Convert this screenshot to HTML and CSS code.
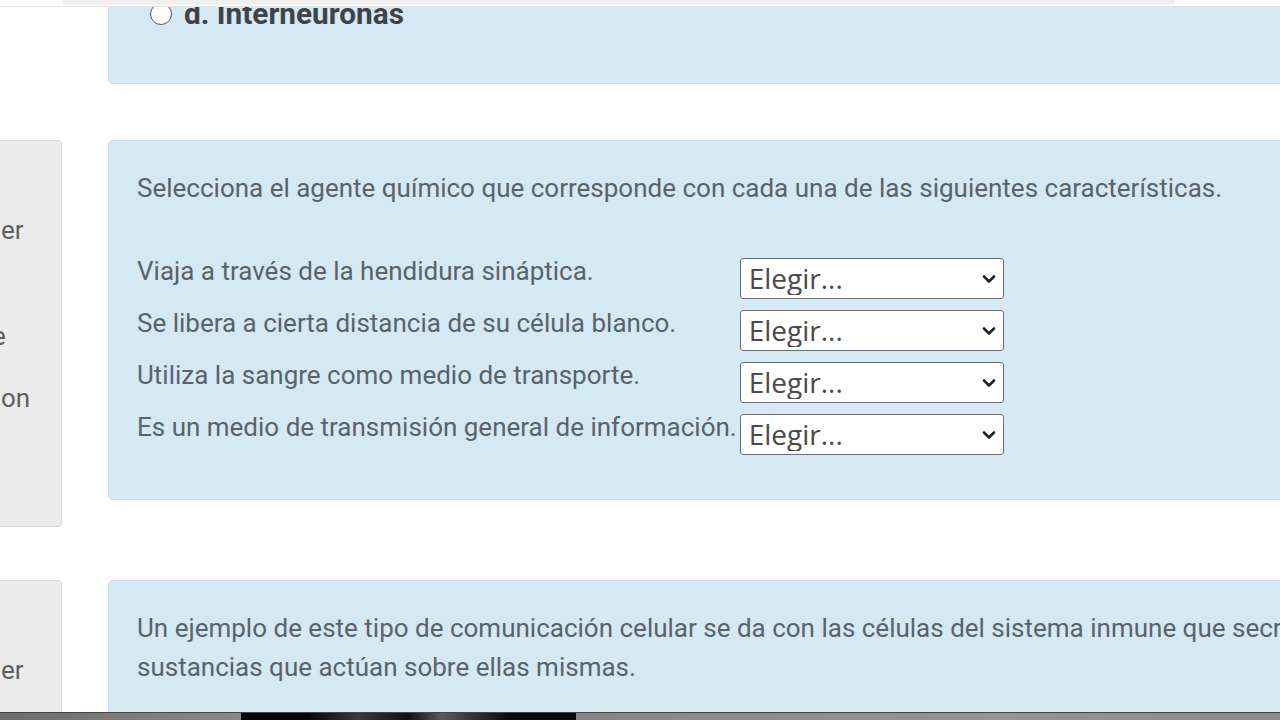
FILE: index.html
```html
<!DOCTYPE html>
<html lang="es">
<head>
  <meta charset="UTF-8">
  <title>Cuestionario</title>
  <link rel="stylesheet" href="styles.css">
</head>
<body>
  <div class="topbar">
    <div class="topbar-inner"></div>
  </div>

  <div class="page">
    <div class="que first">
      <div class="info empty"></div>
      <div class="content">
        <div class="formulation">
          <div class="answer">
            <span class="radio"></span>
            <span class="answer-text">d. Interneuronas</span>
          </div>
        </div>
      </div>
    </div>

    <div class="que">
      <div class="info">
        <p class="info-line">er</p>
        <p class="info-line cut gap-lg">e</p>
        <p class="info-line gap-sm">on</p>
      </div>
      <div class="content">
        <div class="formulation">
          <p class="qtext">Selecciona el agente químico que corresponde con cada una de las siguientes características.</p>
          <table class="answers">
            <tr>
              <td class="label">Viaja a través de la hendidura sináptica.</td>
              <td class="control">
                <div class="select-wrap">
                  <select><option>Elegir...</option></select>
                  <svg class="chevron" viewBox="0 0 16 16"><path d="M3 5.5l5 5 5-5" fill="none" stroke="currentColor" stroke-width="2.6" stroke-linecap="round" stroke-linejoin="round"/></svg>
                </div>
              </td>
            </tr>
            <tr>
              <td class="label">Se libera a cierta distancia de su célula blanco.</td>
              <td class="control">
                <div class="select-wrap">
                  <select><option>Elegir...</option></select>
                  <svg class="chevron" viewBox="0 0 16 16"><path d="M3 5.5l5 5 5-5" fill="none" stroke="currentColor" stroke-width="2.6" stroke-linecap="round" stroke-linejoin="round"/></svg>
                </div>
              </td>
            </tr>
            <tr>
              <td class="label">Utiliza la sangre como medio de transporte.</td>
              <td class="control">
                <div class="select-wrap">
                  <select><option>Elegir...</option></select>
                  <svg class="chevron" viewBox="0 0 16 16"><path d="M3 5.5l5 5 5-5" fill="none" stroke="currentColor" stroke-width="2.6" stroke-linecap="round" stroke-linejoin="round"/></svg>
                </div>
              </td>
            </tr>
            <tr>
              <td class="label">Es un medio de transmisión general de información.</td>
              <td class="control">
                <div class="select-wrap">
                  <select><option>Elegir...</option></select>
                  <svg class="chevron" viewBox="0 0 16 16"><path d="M3 5.5l5 5 5-5" fill="none" stroke="currentColor" stroke-width="2.6" stroke-linecap="round" stroke-linejoin="round"/></svg>
                </div>
              </td>
            </tr>
          </table>
        </div>
      </div>
    </div>

    <div class="que">
      <div class="info">
        <p class="info-line">er</p>
      </div>
      <div class="content">
        <div class="formulation">
          <p class="qtext">Un ejemplo de este tipo de comunicación celular se da con las células del sistema inmune que secretan sustancias que actúan sobre ellas mismas.</p>
        </div>
      </div>
    </div>
  </div>

  <div class="player">
    <div class="player-left"></div>
    <div class="player-video"></div>
    <div class="player-right"></div>
  </div>
</body>
</html>
```

FILE: styles.css
```css
* {
  margin: 0;
  padding: 0;
  box-sizing: border-box;
}

html, body {
  width: 1280px;
  height: 720px;
  overflow: hidden;
}

body {
  font-family: Roboto, 'Liberation Sans', sans-serif;
  background: #fff;
  color: #59636a;
  font-size: 26px;
}

/* header strip that sits over the page */
.topbar {
  position: fixed;
  top: 0;
  left: 0;
  right: 0;
  height: 7px;
  background: #fff;
  border-bottom: 1px solid #e2e4e6;
  z-index: 5;
}

.topbar-inner {
  margin-left: 62px;
  width: 1113px;
  height: 4px;
  background: #efeff0;
  border-radius: 0 0 8px 8px;
  box-shadow: 0 1px 2px rgba(0, 0, 0, 0.06);
}

.page {
  width: 1400px;
  margin-left: -10px;
  margin-top: -20px;
}

.que {
  display: flex;
  align-items: flex-start;
  gap: 46px;
  margin-bottom: 53px;
}

.que.first {
  margin-bottom: 56px;
}

.info {
  width: 72px;
  height: 387px;
  flex-shrink: 0;
  background: #ececec;
  border: 1px solid #d9d9d9;
  border-radius: 4px;
  padding: 74px 0 0 10px;
  overflow: hidden;
}

.info.empty {
  visibility: hidden;
  height: 10px;
}

.info-line {
  line-height: 30px;
  color: #5c5f62;
  white-space: nowrap;
}

.info-line.cut {
  text-indent: -9px;
}

.info-line.gap-lg {
  margin-top: 76px;
}

.info-line.gap-sm {
  margin-top: 32px;
}

.content {
  width: 1282px;
}

.formulation {
  background: #d4e9f4;
  border: 1px solid #c6e3ec;
  border-bottom-color: #b7dde6;
  border-radius: 5px;
  padding: 28px 29px 33px 28px;
}

.que.first .formulation {
  padding: 18px 29px 54px 41px;
}

.answer {
  display: flex;
  align-items: center;
  gap: 12px;
  height: 30px;
}

.radio {
  width: 22px;
  height: 22px;
  border: 1.5px solid #555;
  border-radius: 50%;
  background: #fff;
  flex-shrink: 0;
}

.answer-text {
  font-weight: 700;
  font-size: 29.8px;
  color: #3e4347;
  margin-top: -2px;
}

.qtext {
  line-height: 39px;
}

.qtext + .answers {
  margin-top: 50px;
}

.answers {
  border-collapse: collapse;
}

.answers td {
  padding: 0;
  vertical-align: top;
}

.answers .label {
  line-height: 27px;
  white-space: nowrap;
  padding-right: 3px;
}

.answers .control {
  padding-bottom: 11px;
}

.select-wrap {
  position: relative;
  width: 264px;
  height: 41px;
}

.select-wrap select {
  -webkit-appearance: none;
  appearance: none;
  width: 100%;
  height: 100%;
  background: #fff;
  border: 1.5px solid #6d7073;
  border-radius: 3px;
  font-family: 'Open Sans', 'Noto Sans', sans-serif;
  font-size: 28px;
  color: #4a4a4a;
  padding: 0 0 3px 8px;
  outline: none;
}

.chevron {
  position: absolute;
  right: 7px;
  top: 13px;
  width: 16px;
  height: 16px;
  color: #222;
  pointer-events: none;
}

/* video strip over the bottom edge */
.player {
  position: fixed;
  left: 0;
  right: 0;
  bottom: 0;
  height: 8px;
  display: flex;
  border-top: 1px solid #454545;
  z-index: 5;
}

.player-left {
  width: 241px;
  background: linear-gradient(90deg, #6f6c6c, #8d8888);
}

.player-video {
  width: 335px;
  background: linear-gradient(90deg, #050505 20%, #3a3a3a 35%, #111 50%, #5a5a5a 60%, #0a0a0a 80%);
}

.player-right {
  flex: 1;
  background: linear-gradient(90deg, #8a8585, #999494 60%, #8e8989);
}
```
